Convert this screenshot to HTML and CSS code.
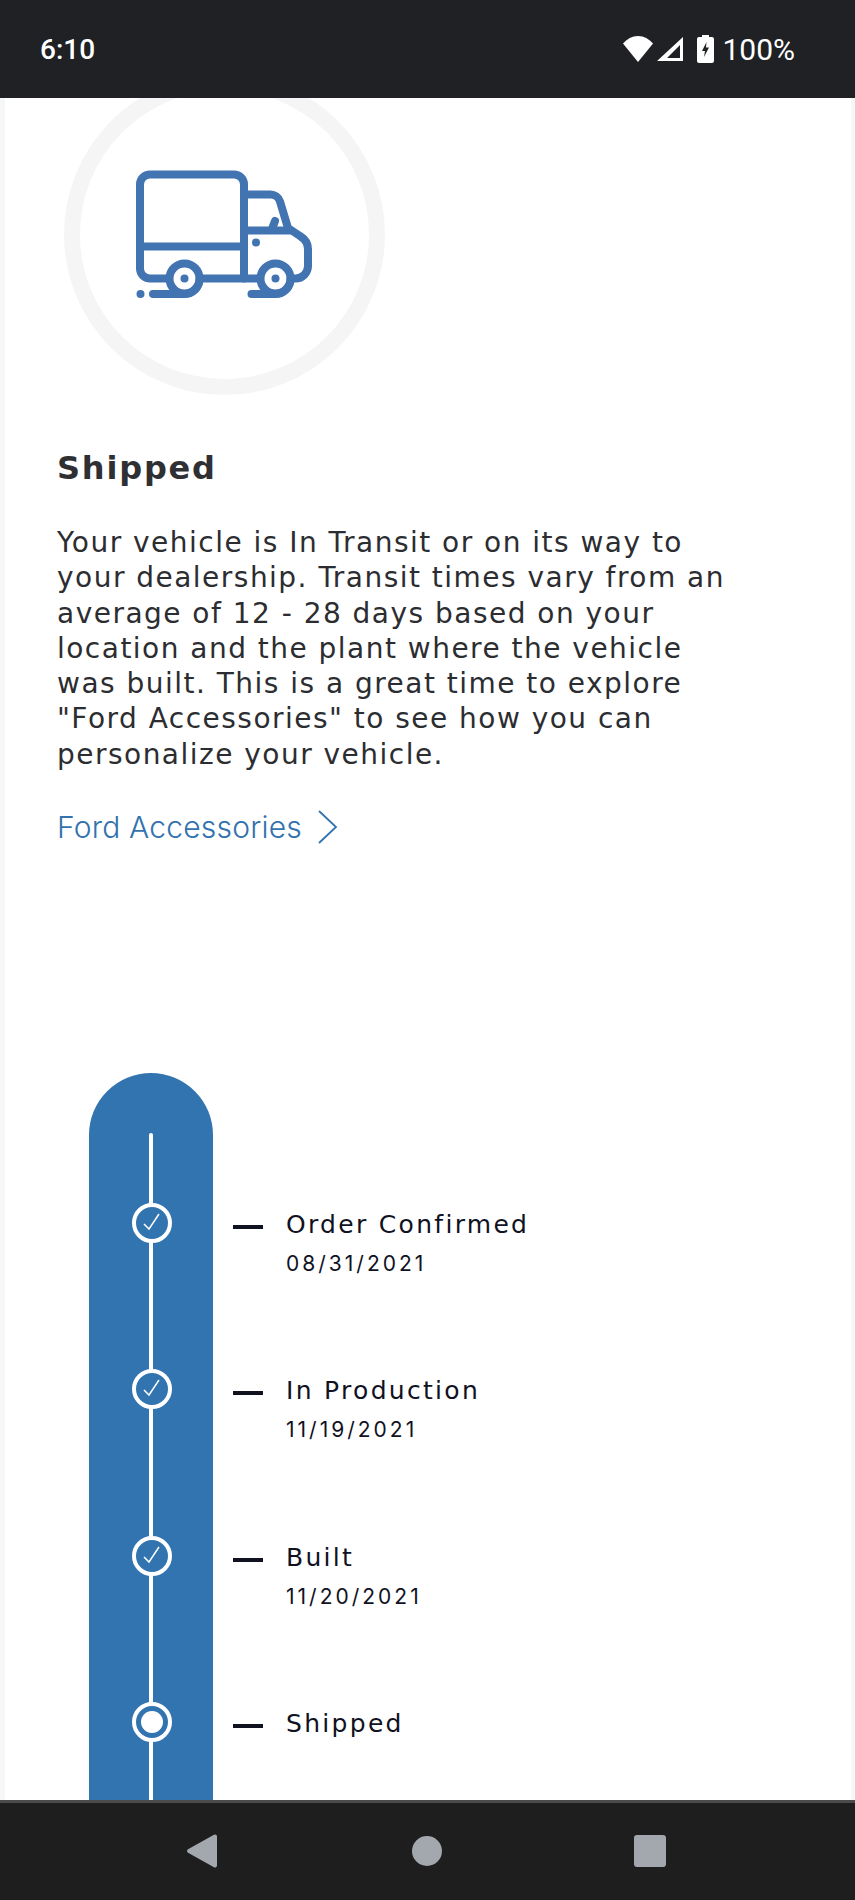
FILE: index.html
```html
<!DOCTYPE html>
<html lang="en">
<head>
  <meta charset="UTF-8" />
  <meta name="viewport" content="width=device-width, initial-scale=1.0" />
  <title>Order status</title>
  <link rel="stylesheet" href="styles.css">
</head>
<body>
  <div class="phone">
    <header class="status-bar">
      <span class="clock">6:10</span>
      <div class="status-icons">
        <svg class="wifi" width="30" height="26" viewBox="0 0 30 26"><path d="M0 7.500C4 3 9 0 15 0s11 3 15 7.500L15 26z" fill="#fff"/></svg>
        <svg class="signal" width="26" height="24" viewBox="0 0 26 24"><path fill-rule="evenodd" d="M26 0V24H0zM23 8 10 21H23z" fill="#fff"/></svg>
        <svg class="battery" width="17" height="28" viewBox="0 0 17 28"><path fill-rule="evenodd" d="M5 0h7v2h3a2 2 0 0 1 2 2v22a2 2 0 0 1-2 2H2a2 2 0 0 1-2-2V4a2 2 0 0 1 2-2h3zM9.500 7 5 16H8L7 22 12 12.500H9z" fill="#fff"/></svg>
        <span class="battery-level">100%</span>
      </div>
    </header>

    <main class="content">
      <div class="truck-ring">
        <svg class="truck" width="190" height="140" viewBox="130 165 190 140" fill="none" stroke="#4274b2" stroke-width="8" stroke-linecap="round" stroke-linejoin="round">
          <path d="M166 278.500H150a10 10 0 0 1-10-10V184.500a10 10 0 0 1 10-10H234a10 10 0 0 1 10 10V278.500"/>
          <path d="M140.500 246.500H244"/>
          <path d="M203 278.500H257"/>
          <path d="M244 194.500H270a10 10 0 0 1 10 7L288 228l12 8q8 5 8 13V266a12.500 12.500 0 0 1-12.500 12.500H294"/>
          <path d="M244 230.500H290"/>
          <path d="M275 221l-3 8"/>
          <circle cx="184.500" cy="278.500" r="15"/>
          <circle cx="275.500" cy="278.500" r="15"/>
          <path d="M153 294H184.500a15 15 0 0 0 15-15"/>
          <path d="M251.500 294H275.500a15 15 0 0 0 15-15"/>
          <g fill="#4274b2" stroke="none">
            <circle cx="184.500" cy="278.500" r="4"/>
            <circle cx="275.500" cy="278.500" r="4"/>
            <circle cx="140.500" cy="294" r="4"/>
            <circle cx="256" cy="242.500" r="4"/>
          </g>
        </svg>
      </div>

      <section class="stage-info">
        <h2>Shipped</h2>
        <p>Your vehicle is In Transit or on its way to<br>your dealership. Transit times vary from an<br>average of 12 - 28 days based on your<br>location and the plant where the vehicle<br>was built. This is a great time to explore<br>"Ford Accessories" to see how you can<br>personalize your vehicle.</p>
        <a class="link" href="#">Ford Accessories
          <svg width="20" height="34" viewBox="0 0 20 34" fill="none" stroke="#3272ae" stroke-width="1.800"><path d="M1 1l17 16L1 33"/></svg>
        </a>
      </section>

      <section class="timeline">
        <div class="track">
          <div class="track-line"></div>
        </div>
        <ul class="steps">
          <li class="step">
            <span class="node">
              <svg width="22" height="22" viewBox="0 0 22 22" fill="none" stroke="#fff" stroke-width="1.500"><path d="M3 12l5 5L18 2"/></svg>
            </span>
            <span class="dash"></span>
            <div class="step-text">
              <div class="step-name">Order Confirmed</div>
              <div class="step-date">08/31/2021</div>
            </div>
          </li>
          <li class="step">
            <span class="node">
              <svg width="22" height="22" viewBox="0 0 22 22" fill="none" stroke="#fff" stroke-width="1.500"><path d="M3 12l5 5L18 2"/></svg>
            </span>
            <span class="dash"></span>
            <div class="step-text">
              <div class="step-name">In Production</div>
              <div class="step-date">11/19/2021</div>
            </div>
          </li>
          <li class="step">
            <span class="node">
              <svg width="22" height="22" viewBox="0 0 22 22" fill="none" stroke="#fff" stroke-width="1.500"><path d="M3 12l5 5L18 2"/></svg>
            </span>
            <span class="dash"></span>
            <div class="step-text">
              <div class="step-name">Built</div>
              <div class="step-date">11/20/2021</div>
            </div>
          </li>
          <li class="step">
            <span class="node current"><span class="node-dot"></span></span>
            <span class="dash"></span>
            <div class="step-text">
              <div class="step-name">Shipped</div>
            </div>
          </li>
        </ul>
      </section>
    </main>

    <footer class="nav-bar">
      <svg width="32" height="36" viewBox="0 0 32 36"><path d="M29 1.500a2 2 0 0 1 2 2v29a2 2 0 0 1-3 1.700L2 19.700a2 2 0 0 1 0-3.400L28 1.800z" fill="#a3a7ae"/></svg>
      <span class="nav-home"></span>
      <span class="nav-recent"></span>
    </footer>
  </div>
</body>
</html>
```

FILE: styles.css
```css
* {
  box-sizing: border-box;
}

html, body {
  margin: 0;
  padding: 0;
}

body {
  font-family: 'DejaVu Sans', sans-serif;
  background: #fff;
}

.phone {
  width: 855px;
  height: 1900px;
  display: flex;
  flex-direction: column;
  overflow: hidden;
}

/* status bar */
.status-bar {
  height: 98px;
  flex: none;
  background: #202125;
  color: #fff;
  display: flex;
  justify-content: space-between;
  align-items: center;
  padding: 0 60px 0 40px;
  font-family: 'Roboto', sans-serif;
  font-size: 28px;
}

.clock {
  font-weight: 500;
}

.status-icons {
  display: flex;
  align-items: center;
}

.signal {
  margin-left: 4px;
}

.battery {
  margin-left: 14px;
}

.battery-level {
  margin-left: 8px;
  font-size: 30px;
}

/* main area */
.content {
  flex: 1;
  overflow: hidden;
  border-left: 5px solid #f6f7f8;
  border-right: 4px solid #f6f7f8;
  padding: 0 0 0 52px;
}

.truck-ring {
  width: 321px;
  height: 321px;
  margin: -24px 0 0 7px;
  border: 16px solid #f5f5f6;
  border-radius: 50%;
  display: flex;
  align-items: center;
  justify-content: center;
}

.stage-info h2 {
  margin: 52px 0 0;
  font-size: 32px;
  line-height: 42px;
  font-weight: 700;
  letter-spacing: 1.800px;
  color: #2f3033;
}

.stage-info p {
  margin: 36px 0 0;
  font-size: 28px;
  line-height: 35.3px;
  letter-spacing: 1.480px;
  color: #2b2d31;
}

.link {
  margin-top: 35px;
  display: flex;
  align-items: center;
  gap: 16px;
  font-family: 'Inter', sans-serif;
  font-size: 30px;
  line-height: 40px;
  font-weight: 300;
  letter-spacing: 0.2px;
  color: #3272ae;
  text-decoration: none;
}

/* timeline */
.timeline {
  margin: 226px 0 0 32px;
  display: flex;
  position: relative;
  height: 900px;
}

.track {
  width: 124px;
  background: #3274af;
  border-radius: 62px 62px 0 0;
  flex: none;
  display: flex;
  justify-content: center;
  padding-top: 60px;
}

.track-line {
  width: 4px;
  background: #fff;
  border-radius: 2px 2px 0 0;
}

/* steps sit over the blue track */
.steps {
  list-style: none;
  margin: 0;
  padding: 0;
  position: absolute;
  top: 130px;
  left: 43px;
}

.step {
  height: 166.300px;
  display: flex;
  align-items: flex-start;
}

.node {
  width: 40px;
  height: 40px;
  flex: none;
  border: 4px solid #fff;
  border-radius: 50%;
  background: #3274af;
  display: flex;
  align-items: center;
  justify-content: center;
}

.node-dot {
  width: 22px;
  height: 22px;
  border-radius: 50%;
  background: #fff;
}

.dash {
  width: 30px;
  height: 4px;
  flex: none;
  margin: 22px 23px 0 61px;
  background: #10121f;
}

.step-text {
  margin-top: 5px;
  color: #10121f;
}

.step-name {
  font-size: 25px;
  line-height: 34px;
  letter-spacing: 2.300px;
}

.step-date {
  margin-top: 8px;
  font-family: 'Inter', sans-serif;
  font-size: 21px;
  line-height: 28px;
  letter-spacing: 3px;
}

/* bottom nav */
.nav-bar {
  height: 100px;
  flex: none;
  background: #1e1e1e;
  border-top: 3px solid #4b4b4b;
  display: flex;
  align-items: center;
  padding-bottom: 2px;
  padding-left: 186px;
}

.nav-home {
  width: 30px;
  height: 30px;
  margin-left: 194px;
  border-radius: 50%;
  background: #a3a7ae;
}

.nav-recent {
  width: 32px;
  height: 32px;
  margin-left: 192px;
  border-radius: 3px;
  background: #a3a7ae;
}
```
